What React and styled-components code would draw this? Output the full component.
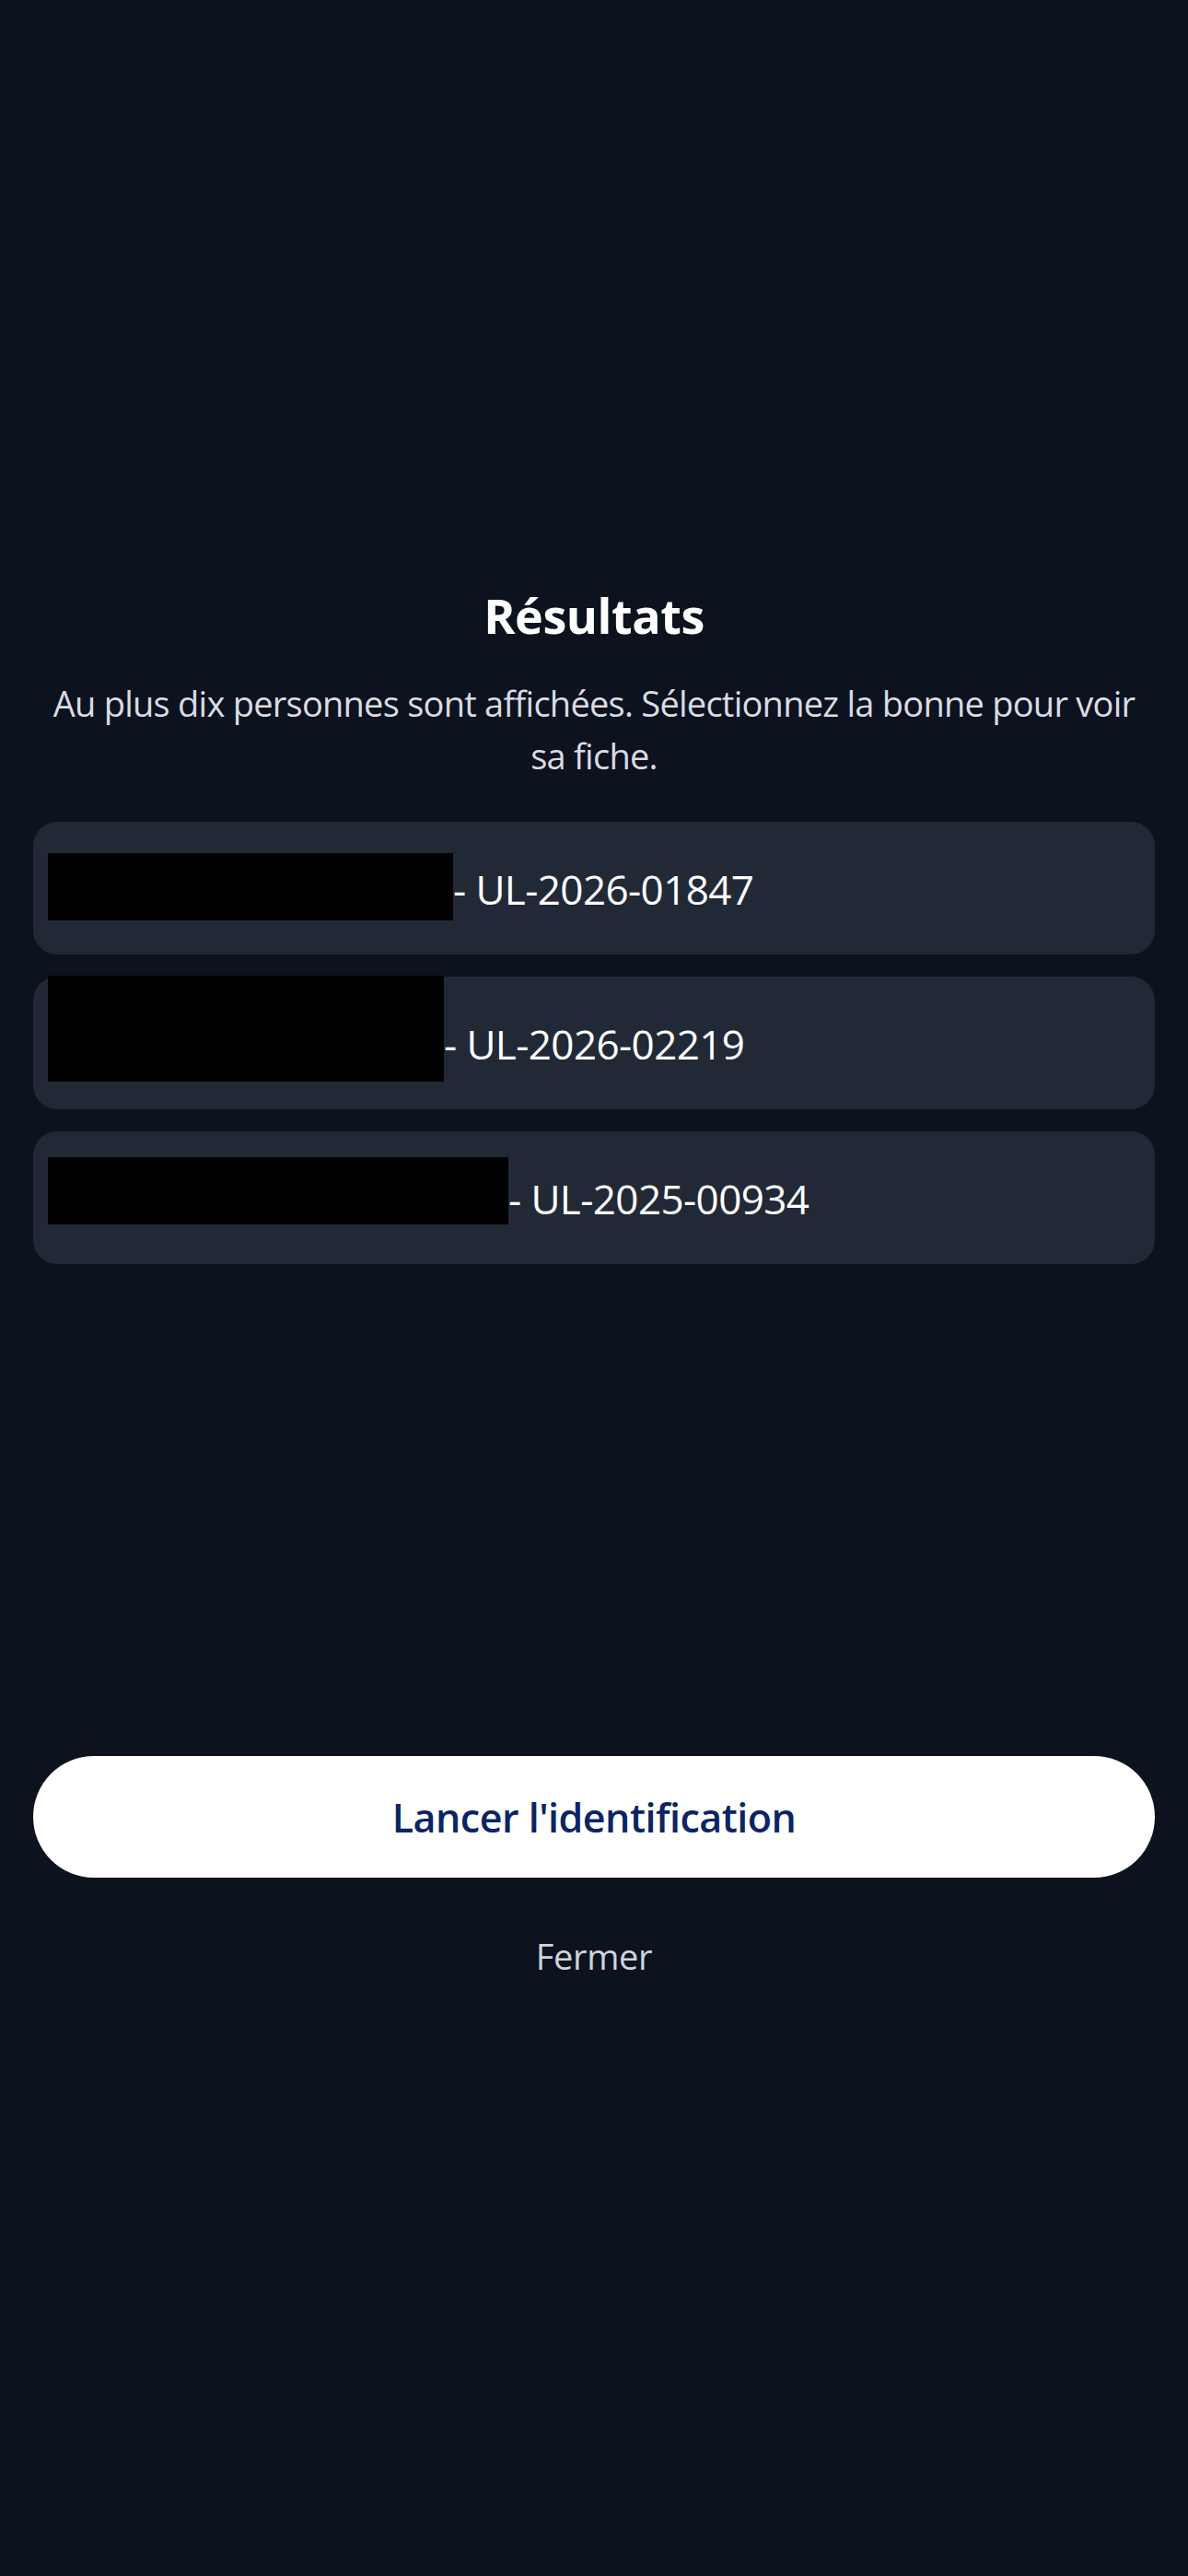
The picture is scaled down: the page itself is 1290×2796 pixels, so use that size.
import React from 'react';
import styled, { createGlobalStyle } from 'styled-components';

const GlobalStyle = createGlobalStyle`
    html, body {
        margin: 0;
        padding: 0;
        background: #0c121e;
    }
    body {
        font-family: "Open Sans", "Noto Sans", sans-serif;
        -webkit-font-smoothing: antialiased;
    }
`;

// names are masked in the reference, only the file number is shown
const results = [
    { id: 'UL-2026-01847', mask: 440, maskHeight: 73, shift: -2 },
    { id: 'UL-2026-02219', mask: 430, maskHeight: 115, shift: -16 },
    { id: 'UL-2025-00934', mask: 500, maskHeight: 73, shift: -8 },
];

function App() {
    return (
        <>
            <GlobalStyle />
            <Page>
                <Title>Résultats</Title>
                <Subtitle>
                    Au plus dix personnes sont affichées. Sélectionnez la bonne pour voir sa fiche.
                </Subtitle>
                <ResultList>
                    {results.map((r) => (
                        <ResultCard key={r.id} type="button">
                            <Redacted $w={r.mask} $h={r.maskHeight} $shift={r.shift} />
                            <CardText>- {r.id}</CardText>
                        </ResultCard>
                    ))}
                </ResultList>
                <PrimaryButton type="button">Lancer l'identification</PrimaryButton>
                <CloseLink type="button">Fermer</CloseLink>
            </Page>
        </>
    );
}

const Page = styled.main`
    min-height: 2796px;
    box-sizing: border-box;
    padding: 636px 36px 0;
    display: flex;
    flex-direction: column;
    align-items: stretch;
`;

const Title = styled.h1`
    margin: 0;
    text-align: center;
    color: #ffffff;
    font-size: 52px;
    font-weight: 700;
    line-height: 64px;
    letter-spacing: -0.4px;
`;

const Subtitle = styled.p`
    margin: 35px 0 0;
    padding: 0;
    text-align: center;
    color: #d9dce2;
    font-size: 38px;
    line-height: 57px;
    letter-spacing: -0.75px;
`;

const ResultList = styled.div`
    margin-top: 43px;
    display: flex;
    flex-direction: column;
    gap: 24px;
`;

const ResultCard = styled.button`
    height: 144px;
    border: none;
    border-radius: 26px;
    background: #222936;
    padding: 0 16px;
    display: flex;
    align-items: center;
    text-align: left;
    font-family: inherit;
    cursor: pointer;
`;

const Redacted = styled.span`
    display: inline-block;
    flex: none;
    width: ${(p) => p.$w}px;
    height: ${(p) => p.$h}px;
    background: #000000;
    transform: translateY(${(p) => p.$shift}px);
`;

const CardText = styled.span`
    color: #ffffff;
    font-size: 44px;
    line-height: 1;
    letter-spacing: -0.6px;
    padding-top: 2px;
`;

const PrimaryButton = styled.button`
    margin-top: 534px;
    height: 132px;
    border: none;
    border-radius: 66px;
    background: #ffffff;
    color: #0b2563;
    font-family: inherit;
    font-size: 43px;
    font-weight: 600;
    letter-spacing: -0.5px;
    cursor: pointer;
`;

const CloseLink = styled.button`
    margin: 56px auto 0;
    border: none;
    background: transparent;
    color: #cfd3da;
    font-family: inherit;
    font-size: 38px;
    line-height: 56px;
    letter-spacing: -0.3px;
    cursor: pointer;
`;

export default App;
